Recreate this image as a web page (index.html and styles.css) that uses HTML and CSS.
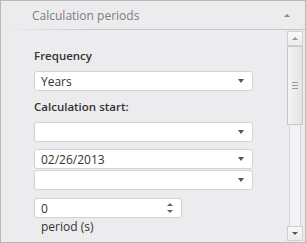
FILE: index.html
```html
<!DOCTYPE html>
<html lang="en">
<head>
  <meta charset="UTF-8">
  <title>Calculation periods</title>
  <link rel="stylesheet" href="styles.css">
</head>
<body>
  <div class="panel">
    <div class="panel-header">
      <span class="panel-title">Calculation periods</span>
      <span class="collapse-arrow"></span>
    </div>

    <div class="panel-body">
      <div class="form">
        <div class="label">Frequency</div>
        <div class="select"><span>Years</span><i class="caret"></i></div>

        <div class="label">Calculation start:</div>
        <div class="select gap"><span></span><i class="caret"></i></div>
        <div class="select"><span>02/26/2013</span><i class="caret"></i></div>
        <div class="select stacked"><span></span><i class="caret"></i></div>

        <div class="spin"><span>0</span>
          <span class="spin-arrows"><i class="up"></i><i class="down"></i></span>
        </div>
        <div class="unit">period (s)</div>
      </div>

      <div class="scrollbar">
        <div class="sb-btn"><i class="up"></i></div>
        <div class="sb-thumb"><b></b><b></b><b></b></div>
        <div class="sb-track"></div>
        <div class="sb-btn"><i class="down"></i></div>
      </div>
    </div>
  </div>
</body>
</html>
```

FILE: styles.css
```css
body {
  margin: 0;
  font-family: 'Open Sans', sans-serif;
  color: #333;
}

.panel {
  width: 306px;
  height: 243px;
  box-sizing: border-box;
  border: 1px solid #b9b9b9;
  background: #ececee;
  display: flex;
  flex-direction: column;
}

.panel-header {
  height: 29px;
  position: relative;
  display: flex;
  align-items: center;
  padding-left: 31px;
  padding-right: 15px;
}

.panel-header::after {
  content: "";
  position: absolute;
  left: 4px;
  right: 0;
  bottom: 0;
  height: 1px;
  background: linear-gradient(to right, #ececee, #c6c6c8 30%, #c6c6c8);
}

.panel-title {
  flex: 1;
  font-size: 12px;
  color: #7c7c80;
}

.collapse-arrow {
  width: 0;
  height: 0;
  border-left: 3px solid transparent;
  border-right: 3px solid transparent;
  border-bottom: 3px solid #8a8a8a;
}

.panel-body {
  flex: 1;
  display: flex;
  padding-top: 1px;
}

.form {
  flex: 1;
  padding-left: 33px;
  padding-top: 17px;
}

.label {
  font-size: 11.5px;
  font-weight: 600;
  color: #333;
  line-height: 16px;
  margin-bottom: 7px;
}

.select, .spin {
  width: 219px;
  height: 20px;
  box-sizing: border-box;
  background: #fff;
  border: 1px solid #d3d3d5;
  border-radius: 3px;
  display: flex;
  align-items: center;
  padding: 0 8px 0 6px;
  font-size: 12px;
  color: #333;
}

.select span, .spin span {
  flex: 1;
}

.select + .label {
  margin-top: 8px;
}

.select.gap {
  margin-bottom: 7px;
}

.select.stacked {
  margin-top: 1px;
}

.caret {
  width: 0;
  height: 0;
  border-left: 3px solid transparent;
  border-right: 3px solid transparent;
  border-top: 4px solid #555;
}

.spin {
  width: 148px;
  margin-top: 8px;
}

.spin-arrows {
  flex: none !important;
  display: flex;
  flex-direction: column;
  gap: 4px;
}

.spin-arrows i, .sb-btn i {
  display: block;
  width: 0;
  height: 0;
  border-left: 3px solid transparent;
  border-right: 3px solid transparent;
}

.spin-arrows .up, .sb-btn .up {
  border-bottom: 3px solid #666;
}

.spin-arrows .down, .sb-btn .down {
  border-top: 3px solid #666;
}

.unit {
  font-size: 12px;
  color: #333;
  padding-left: 7px;
  margin-top: 1px;
  line-height: 16px;
}

.scrollbar {
  width: 16px;
  margin: 0 2px 1px 0;
  display: flex;
  flex-direction: column;
}

.sb-btn {
  height: 15px;
  box-sizing: border-box;
  border: 1px solid #d0d0d2;
  background: linear-gradient(#f8f8f8, #ececec);
  display: flex;
  align-items: center;
  justify-content: center;
}

.sb-btn .up {
  border-bottom-color: #999;
}

.sb-btn .down {
  border-top-color: #555;
}

.sb-thumb {
  height: 79px;
  box-sizing: border-box;
  border: 1px solid #c8c8ca;
  background: linear-gradient(to right, #f4f4f4, #e4e4e4);
  display: flex;
  flex-direction: column;
  align-items: center;
  justify-content: center;
  gap: 2px;
}

.sb-thumb b {
  width: 6px;
  height: 1px;
  background: #999;
}

.sb-track {
  flex: 1;
  margin: 0 2px;
  border-left: 1px solid #d6d6d8;
  border-right: 1px solid #d6d6d8;
  background: #f2f2f4;
}
```
